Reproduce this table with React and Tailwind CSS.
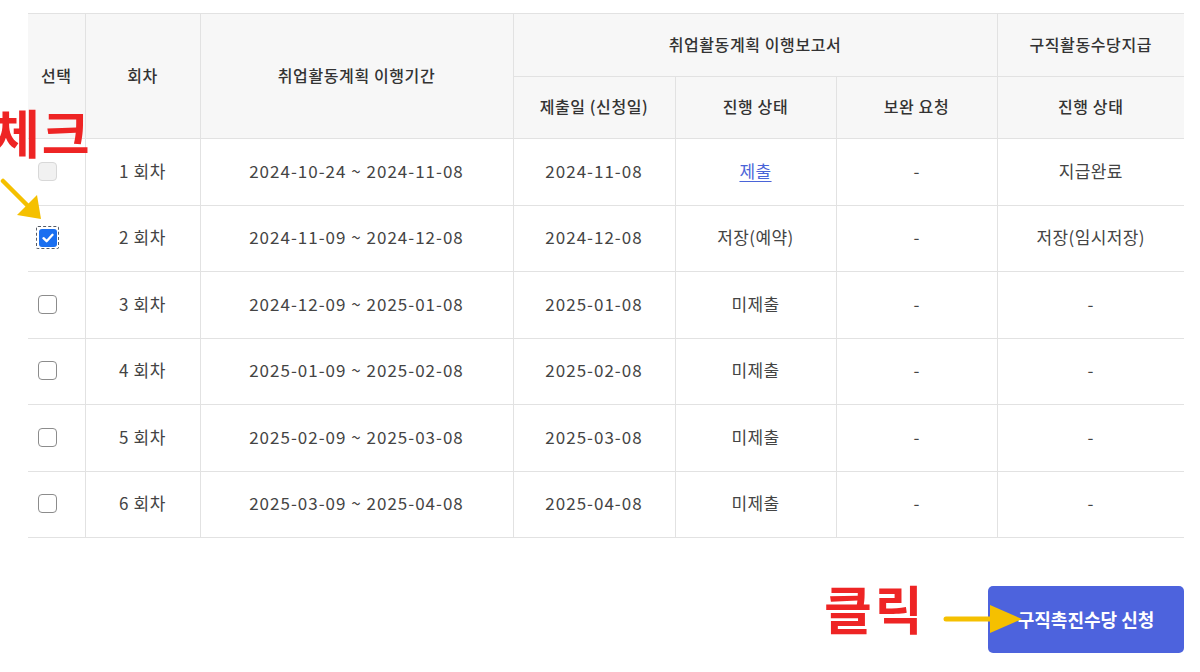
import React from "react";

const rows = [
  { n: "1 회차", period: "2024-10-24 ~ 2024-11-08", date: "2024-11-08", status: "제출", link: true, sup: "-", pay: "지급완료", cb: "disabled" },
  { n: "2 회차", period: "2024-11-09 ~ 2024-12-08", date: "2024-12-08", status: "저장(예약)", sup: "-", pay: "저장(임시저장)", cb: "checked" },
  { n: "3 회차", period: "2024-12-09 ~ 2025-01-08", date: "2025-01-08", status: "미제출", sup: "-", pay: "-", cb: "empty" },
  { n: "4 회차", period: "2025-01-09 ~ 2025-02-08", date: "2025-02-08", status: "미제출", sup: "-", pay: "-", cb: "empty" },
  { n: "5 회차", period: "2025-02-09 ~ 2025-03-08", date: "2025-03-08", status: "미제출", sup: "-", pay: "-", cb: "empty" },
  { n: "6 회차", period: "2025-03-09 ~ 2025-04-08", date: "2025-04-08", status: "미제출", sup: "-", pay: "-", cb: "empty" },
];

function Checkbox({ kind }) {
  if (kind === "checked") {
    return (
      <div className="inline-flex items-center justify-center w-[23px] h-[23px] rounded-[2px] border-[1.5px] border-dashed border-[#555b66] ml-[-2px]">
        <div className="w-[18px] h-[18px] rounded-[3px] bg-[#1a6ff0] flex items-center justify-center">
          <svg width="12" height="10" viewBox="0 0 12 10">
            <path d="M1.5 5.2 L4.6 8.2 L10.5 1.8" fill="none" stroke="white" strokeWidth="2.3" strokeLinecap="round" strokeLinejoin="round" />
          </svg>
        </div>
      </div>
    );
  }
  if (kind === "disabled") {
    return <div className="inline-block w-[19px] h-[19px] rounded-[4px] bg-[#f1f1f1] border border-[#d8d8d8]" />;
  }
  return <div className="inline-block w-[19px] h-[19px] rounded-[4px] bg-white border-[1.5px] border-[#8c8c8c]" />;
}

export default function App() {
  const font = { fontFamily: '"Noto Sans CJK KR", "Noto Sans", sans-serif' };
  const th = "border-[#e2e2e2] font-medium text-[16px] tracking-[0.6px] text-[#333] text-center align-middle pb-[3px]";
  const td = "border-[#e2e2e2] text-[17px] text-[#444] text-center align-middle pb-[3px]";
  return (
    <div className="relative w-[1200px] h-[672px] bg-white overflow-hidden" style={font}>
      <div className="pt-[13px] pl-[28px] flex flex-col">
        <table className="w-[1156px] border-collapse table-fixed">
          <colgroup>
            <col className="w-[57px]" />
            <col className="w-[115px]" />
            <col className="w-[313px]" />
            <col className="w-[162px]" />
            <col className="w-[161px]" />
            <col className="w-[161px]" />
            <col className="w-[187px]" />
          </colgroup>
          <thead className="bg-[#f7f7f7]">
            <tr className="h-[63px]">
              <th rowSpan={2} className={`${th} border-t border-b border-r`}>선택</th>
              <th rowSpan={2} className={`${th} border-t border-b border-r`}>회차</th>
              <th rowSpan={2} className={`${th} border-t border-b border-r`}>취업활동계획 이행기간</th>
              <th colSpan={3} className={`${th} border-t border-b border-r`}>취업활동계획 이행보고서</th>
              <th className={`${th} border-t border-b`}>구직활동수당지급</th>
            </tr>
            <tr className="h-[62px]">
              <th className={`${th} border-b border-r`}>제출일 (신청일)</th>
              <th className={`${th} border-b border-r`}>진행 상태</th>
              <th className={`${th} border-b border-r`}>보완 요청</th>
              <th className={`${th} border-b`}>진행 상태</th>
            </tr>
          </thead>
          <tbody>
            {rows.map((r, i) => (
              <tr key={i} className="h-[66.5px]">
                <td className={`${td} border-b border-r`}>
                  <div className="flex items-center pl-[10px] pt-[2px]">
                    <Checkbox kind={r.cb} />
                  </div>
                </td>
                <td className={`${td} border-b border-r tracking-[0.6px]`}>{r.n}</td>
                <td className={`${td} border-b border-r tracking-[1px]`}>{r.period}</td>
                <td className={`${td} border-b border-r tracking-[1px]`}>{r.date}</td>
                <td className={`${td} border-b border-r tracking-[0.4px]`}>
                  {r.link ? <span className="text-[#4a64d8] underline underline-offset-[3px]">{r.status}</span> : r.status}
                </td>
                <td className={`${td} border-b border-r`}>{r.sup}</td>
                <td className={`${td} border-b tracking-[0.4px]`}>{r.pay}</td>
              </tr>
            ))}
          </tbody>
        </table>
        <div className="flex justify-end w-[1156px] mt-[48px]">
          <button className="w-[196px] h-[67px] rounded-[5px] bg-[#4d63dd] text-white text-[18px] font-bold">
            구직촉진수당 신청
          </button>
        </div>
      </div>

      {/* annotations */}
      <div className="absolute left-[-8px] top-[106px] text-[52px] leading-none font-bold tracking-[2px] text-[#ee2424]">체크</div>
      <svg className="absolute left-0 top-[178px]" width="44" height="44" viewBox="0 0 44 44">
        <line x1="3" y1="3" x2="28" y2="28" stroke="#f5c000" strokeWidth="4.5" strokeLinecap="round" />
        <polygon points="41,41 17,37 37,17" fill="#f5c000" />
      </svg>
      <div className="absolute left-[824px] top-[582px] text-[52px] leading-none font-bold tracking-[3px] text-[#ee2424]">클릭</div>
      <svg className="absolute left-[942px] top-[600px]" width="82" height="40" viewBox="0 0 82 40">
        <line x1="4" y1="19" x2="50" y2="19" stroke="#f5c000" strokeWidth="5" strokeLinecap="round" />
        <polygon points="80,19 48,5 48,33" fill="#f5c000" />
      </svg>
    </div>
  );
}
